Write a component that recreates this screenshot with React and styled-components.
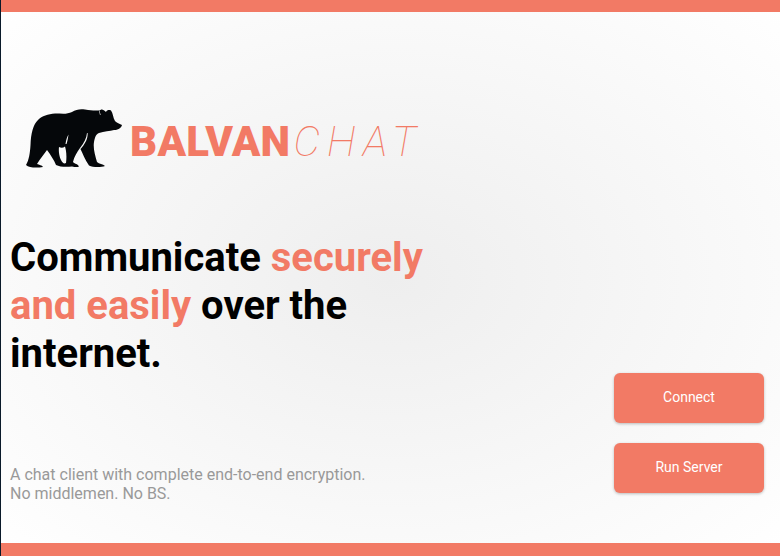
import React from "react";
import styled, { createGlobalStyle } from "styled-components";

const GlobalStyle = createGlobalStyle`
  html, body {
    margin: 0;
    padding: 0;
    background: #0a1a2a;
  }
  #root {
    width: 780px;
    height: 556px;
    overflow: hidden;
  }
`;

export default function App() {
  return (
    <>
      <GlobalStyle />
      <Page>
        <Bar height={12} />
        <Main>
          <Intro>
            <Logo>
              <Bear />
              <LogoBold>BALVAN</LogoBold>
              <LogoThin>CHAT</LogoThin>
            </Logo>
            <Headline>
              Communicate <Accent>securely</Accent>
              <br />
              <Accent>and easily</Accent> over the
              <br />
              internet.
            </Headline>
            <Tagline>
              A chat client with complete end-to-end encryption.
              <br />
              No middlemen. No BS.
            </Tagline>
          </Intro>
          <Actions>
            <ActionButton>Connect</ActionButton>
            <ActionButton>Run Server</ActionButton>
          </Actions>
        </Main>
        <Bar height={13} />
      </Page>
    </>
  );
}

function Bear() {
  return (
    <BearIcon viewBox="26 109 97 62" aria-hidden="true">
      <path
        fill="#05070a"
        fillRule="evenodd"
        d="M122 125 C119 124 116 122 115 121 C113 118 113 113 111 110.5 C109 109.5 107 110 106 112 C104 110 102 109 100.5 110 C96 111 92 110.5 85 109.5 C80 108.8 76 109.5 72 112 C67 114.5 62 113.5 55 113.5 C48 114 42 116 38 120 C33 125 31 133 30.5 145 C30 153 29 160 26 165 C29 168 37 168 43 167 C42 165 39 165 37 164 C40 159 44 154 47 150 C50 154 54 160 56 165 C60 167 66 167 72 166.5 C75 167 77 167.5 79 166.5 C78 164 75 164 73 162 C74 157 77 152 80 148 C83 154 85 160 89 165.5 C93 167.5 101 167.5 105 166 C103 164 99 164 97 162 C95 155 93 148 94 142 C95 137 96 134 99 133 C104 131.5 110 131 114 130 C118 130 121 128.5 122 125 Z
        M59 147 C61 148 63 148 65 146.5 C66 150 67 155 66 163 C64 164 62.5 163 61 160 C59 156 58.5 151 59 147 Z
        M65.5 144 C66 140 67 137 68.5 134.5 C68 138 67.5 141 66.5 144 Z
        M87.6 133 C88 139 85 144 80.6 149 L80 148 C84 143 86.6 138 87 133 Z
        M99.4 110 L100.6 115 L100 115 L98.9 110 Z"
      />
    </BearIcon>
  );
}

const Page = styled.div`
  box-sizing: border-box;
  width: 780px;
  height: 556px;
  margin-left: 1px;
  display: flex;
  flex-direction: column;
  font-family: Roboto, "Liberation Sans", sans-serif;
  background: radial-gradient(ellipse at 50% 50%, #eeeeee 0%, #ffffff 100%);
`;

const Bar = styled.div`
  flex: none;
  height: ${(p) => p.height}px;
  background: #f27a65;
`;

const Main = styled.main`
  flex: 1;
  display: flex;
  justify-content: space-between;
  align-items: flex-end;
  min-height: 0;
`;

const Intro = styled.section`
  width: 440px;
  height: 100%;
  box-sizing: border-box;
  padding: 97px 0 0 9px;
  display: flex;
  flex-direction: column;
`;

const Logo = styled.div`
  display: flex;
  align-items: center;
  height: 62px;
  padding-left: 16px;
  color: #f27a65;
  white-space: nowrap;
`;

const BearIcon = styled.svg`
  flex: none;
  width: 97px;
  height: 62px;
`;

const LogoBold = styled.span`
  margin-left: 7px;
  padding-top: 3px;
  font-size: 42px;
  font-weight: 900;
  line-height: 62px;
  letter-spacing: 0.3px;
`;

const LogoThin = styled.span`
  margin-left: 3px;
  padding-top: 3px;
  font-size: 42px;
  font-weight: 100;
  font-style: italic;
  letter-spacing: 0.17em;
  line-height: 62px;
`;

const Headline = styled.h1`
  margin: 63px 0 0;
  width: 430px;
  font-size: 40px;
  font-weight: 700;
  line-height: 48px;
  color: #000;
`;

const Accent = styled.span`
  color: #f27a65;
`;

const Tagline = styled.p`
  margin: 87px 0 0;
  font-size: 16px;
  line-height: 19px;
  color: #999;
`;

const Actions = styled.div`
  display: flex;
  flex-direction: column;
  gap: 20px;
  padding: 0 17px 50px 0;
`;

const ActionButton = styled.button`
  width: 150px;
  height: 50px;
  padding: 0 0 2px;
  border: 0;
  border-radius: 6px;
  background: #f27a65;
  color: #fff;
  font-family: inherit;
  font-size: 14px;
  font-weight: 400;
  box-shadow: 0 1px 3px rgba(0, 0, 0, 0.25);
`;
